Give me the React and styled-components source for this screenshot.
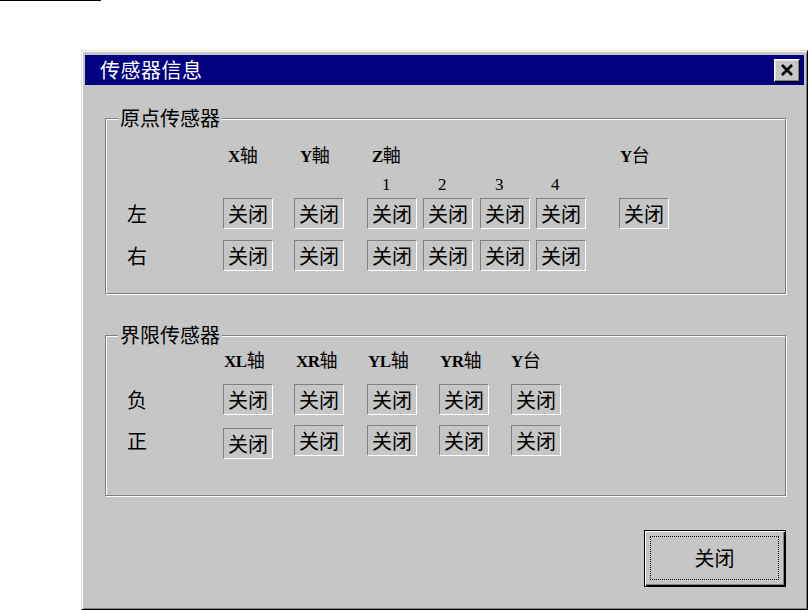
import React from 'react';
import styled, { createGlobalStyle } from 'styled-components';

const GRAY = '#c6c6c6';
const CJK = '"Noto Sans CJK SC", "Noto Sans", sans-serif';

const Global = createGlobalStyle`
  html, body { margin: 0; padding: 0; background: #fff; }
  body { font-family: ${CJK}; color: #000; }
`;

const TopRule = styled.div`
  width: 101px;
  height: 1px;
  background: #000;
`;

const Dialog = styled.div`
  box-sizing: border-box;
  width: 727px;
  height: 560px;
  margin: 49px 0 0 81px;
  background: ${GRAY};
  border: 1px solid;
  border-color: #dfdfdf #000 #000 #dfdfdf;
  box-shadow: inset 1px 1px 0 #fff, inset -1px -1px 0 #808080;
  padding: 4px 3px;
  display: flex;
  flex-direction: column;
`;

const TitleBar = styled.div`
  height: 30px;
  flex: none;
  background: #000080;
  display: flex;
  align-items: center;
  justify-content: space-between;
  padding: 0 4px 0 15px;
`;

const TitleText = styled.span`
  color: #fff;
  font-size: 20px;
  line-height: 1;
  letter-spacing: 0.5px;
`;

const CloseBox = styled.button`
  box-sizing: border-box;
  width: 26px;
  height: 23px;
  padding: 0;
  background: ${GRAY};
  border: 1px solid;
  border-color: #fff #000 #000 #fff;
  box-shadow: inset -1px -1px 0 #808080, inset 1px 1px 0 #dfdfdf;
  display: flex;
  align-items: center;
  justify-content: center;
`;

const Body = styled.div`
  padding: 22px 18px 0 20px;
  display: flex;
  flex-direction: column;
`;

const Group = styled.fieldset`
  margin: ${p => p.$mt}px 0 0 0;
  padding: ${p => p.$pt}px 0 ${p => p.$pb}px 0;
  min-width: 0;
  border: 1px solid #808080;
  box-shadow: 1px 1px 0 #fff, inset 1px 1px 0 #fff;
`;

const Legend = styled.legend`
  margin-left: 12px;
  padding: 0 2px;
  font-size: 20px;
  line-height: 22px;
  background: ${GRAY};
`;

const Line = styled.div`
  display: grid;
  grid-template-columns: ${p => p.$cols};
  height: ${p => p.$h}px;
  margin-top: ${p => p.$mt || 0}px;
  align-items: center;
`;

const Header = styled.span`
  padding-left: ${p => p.$pl || 0}px;
  font-size: 18px;
  line-height: 1;
  white-space: nowrap;
`;

const Latin = styled.b`
  font-family: "Liberation Serif", serif;
  font-weight: 700;
  font-size: 17px;
  letter-spacing: -0.5px;
`;

const Num = styled.span`
  padding-left: 15px;
  font-family: "Liberation Serif", serif;
  font-size: 17px;
  line-height: 1;
`;

const RowLabel = styled.span`
  padding-left: 21px;
  font-size: 20px;
  line-height: 1;
`;

const StateBox = styled.div`
  box-sizing: border-box;
  width: 50px;
  height: 31px;
  margin-top: ${p => (p.$drop ? 6 : 0)}px;
  border: 1px solid;
  border-color: #808080 #fff #fff #808080;
  display: flex;
  align-items: center;
  justify-content: center;
  font-size: 20px;
  line-height: 1;
`;

const Footer = styled.div`
  margin-top: 34px;
  display: flex;
  justify-content: flex-end;
`;

const DefaultButton = styled.button`
  box-sizing: border-box;
  width: 142px;
  height: 57px;
  padding: 5px 6px 6px 5px;
  background: ${GRAY};
  border: 1px solid #000;
  box-shadow: inset 1px 1px 0 #fff, inset -1px -1px 0 #000, inset -2px -2px 0 #808080;
  display: flex;
  font-family: ${CJK};
  font-size: 20px;
  color: #000;
`;

const FocusRing = styled.span`
  flex: 1;
  border: 1px dotted #000;
  display: flex;
  align-items: center;
  justify-content: center;
  line-height: 1;
`;

const Empty = styled.span``;

const COLS1 = '117px 71px 73px 56px 57px 56px 83px 50px';
const COLS2 = '117px 71px 73px 72px 72px 50px';

const Axis = ({ latin, rest, pl }) => (
  <Header $pl={pl}>
    <Latin>{latin}</Latin>
    {rest}
  </Header>
);

export default function App() {
  return (
    <>
      <Global />
      <TopRule />
      <Dialog>
        <TitleBar>
          <TitleText>传感器信息</TitleText>
          <CloseBox aria-label="关闭">
            <svg width="14" height="12" viewBox="0 0 14 12">
              <path d="M2 1 L12 11 M12 1 L2 11" stroke="#000" strokeWidth="2.6" fill="none" />
            </svg>
          </CloseBox>
        </TitleBar>
        <Body>
          <Group $mt={0} $pt={11} $pb={22}>
            <Legend>原点传感器</Legend>
            <Line $cols={COLS1} $h={30}>
              <Empty />
              <Axis latin="X" rest="轴" pl={5} />
              <Axis latin="Y" rest="軸" pl={6} />
              <Axis latin="Z" rest="軸" pl={5} />
              <Empty />
              <Empty />
              <Empty />
              <Axis latin="Y" rest="台" pl={1} />
            </Line>
            <Line $cols={COLS1} $h={28}>
              <Empty />
              <Empty />
              <Empty />
              <Num>1</Num>
              <Num>2</Num>
              <Num>3</Num>
              <Num>4</Num>
            </Line>
            <Line $cols={COLS1} $h={31}>
              <RowLabel>左</RowLabel>
              {Array.from({ length: 7 }).map((_, i) => (
                <StateBox key={i}>关闭</StateBox>
              ))}
            </Line>
            <Line $cols={COLS1} $h={31} $mt={11}>
              <RowLabel>右</RowLabel>
              {Array.from({ length: 6 }).map((_, i) => (
                <StateBox key={i}>关闭</StateBox>
              ))}
            </Line>
          </Group>

          <Group $mt={30} $pt={0} $pb={43}>
            <Legend>界限传感器</Legend>
            <Line $cols={COLS2} $h={28}>
              <Empty />
              <Axis latin="XL" rest="轴" pl={1} />
              <Axis latin="XR" rest="轴" pl={2} />
              <Axis latin="YL" rest="轴" pl={1} />
              <Axis latin="YR" rest="轴" pl={1} />
              <Axis latin="Y" rest="台" pl={0} />
            </Line>
            <Line $cols={COLS2} $h={30} $mt={10}>
              <RowLabel>负</RowLabel>
              {Array.from({ length: 5 }).map((_, i) => (
                <StateBox key={i}>关闭</StateBox>
              ))}
            </Line>
            <Line $cols={COLS2} $h={30} $mt={8}>
              <RowLabel>正</RowLabel>
              {Array.from({ length: 5 }).map((_, i) => (
                <StateBox key={i} $drop={i === 0}>关闭</StateBox>
              ))}
            </Line>
          </Group>

          <Footer>
            <DefaultButton>
              <FocusRing>关闭</FocusRing>
            </DefaultButton>
          </Footer>
        </Body>
      </Dialog>
    </>
  );
}
